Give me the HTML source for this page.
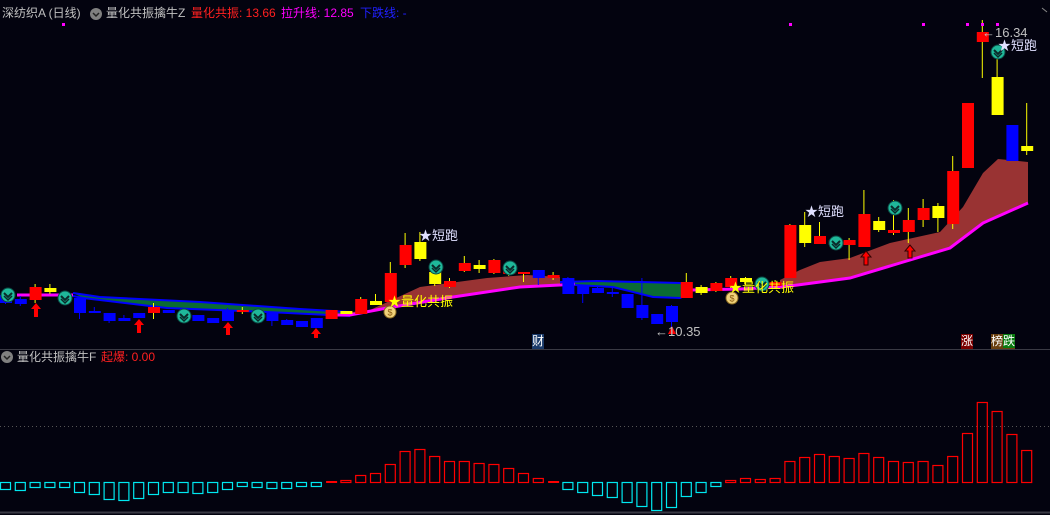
<!DOCTYPE html>
<html><head><meta charset="utf-8">
<style>
html,body{margin:0;padding:0;background:#03030f;}
body{width:1050px;height:515px;overflow:hidden;position:relative;font-family:"Liberation Sans","Noto Sans CJK SC",sans-serif;}
.t{position:absolute;font-size:12px;white-space:nowrap;line-height:15px;}
svg{position:absolute;left:0;top:0;}
</style></head><body>
<svg id="s" width="1050" height="515" xmlns="http://www.w3.org/2000/svg">
<line x1="0" y1="349.5" x2="1050" y2="349.5" stroke="#3a3a44" stroke-width="1"/>
<line x1="0" y1="426.5" x2="1050" y2="426.5" stroke="#555" stroke-width="1" stroke-dasharray="1,3"/>
<line x1="0" y1="512.5" x2="1050" y2="512.5" stroke="#3a3a44" stroke-width="2"/>
<polygon points="73,293 100,297 200,302 300,309 350,312 350,316 267,312 167,308 83,298" fill="#0a6a34"/>
<polyline points="73,293 100,297 200,302 300,309 350,312" fill="none" stroke="#0000ff" stroke-width="2"/>
<polyline points="73,296 83,298 167,308 267,312 350,316" fill="none" stroke="#0000ff" stroke-width="2"/>
<polyline points="17,295 57,295 73,295" fill="none" stroke="#ff00ff" stroke-width="3"/>
<polygon points="335,314 370,310 420,287 487,278 527,275 560,277 560,285 520,287 453,297 387,308 350,315" fill="#993333"/>
<polyline points="335,315 350,315 387,308 453,297 520,287 560,285 575,284" fill="none" stroke="#ff00ff" stroke-width="3"/>
<polygon points="575,282 597,281 680,283 690,290 680,298 653,297 613,287 575,285" fill="#0a6a34"/>
<polyline points="560,282 597,281 680,283 692,288" fill="none" stroke="#0000ff" stroke-width="2"/>
<polyline points="575,285 613,287 653,297 680,298 692,292" fill="none" stroke="#0000ff" stroke-width="2"/>
<polyline points="692,290 740,289 780,287" fill="none" stroke="#ff00ff" stroke-width="3"/>
<polygon points="780,280 800,270 820,262 850,258 890,243 940,232 963,207 983,173 998,159 1028,162 1028,203 983,223 950,248 900,263 850,278 790,286 780,287" fill="#993333"/>
<polyline points="780,287 790,286 850,278 900,263 950,248 983,223 1028,203" fill="none" stroke="#ff00ff" stroke-width="3"/>
<g id="c"></g>
<g fill="#ff0000">
<path d="M36,303 l-5,6 h3 v8 h4 v-8 h3z"/>
<path d="M139,319 l-5,6 h3 v8 h4 v-8 h3z"/>
<path d="M228,322 l-5,6 h3 v7 h4 v-7 h3z"/>
<path d="M316,328 l-5,6 h3 v4 h4 v-4 h3z"/>
<path d="M866,251 l-5,6 h3 v8 h4 v-8 h3z" stroke="#300" stroke-width="1"/>
<path d="M910,245 l-5,6 h3 v7 h4 v-7 h3z" stroke="#300" stroke-width="1"/>
<path d="M672,326 l-4,8 h8z"/>
</g>
<g fill="#ff00ff">
<rect x="62" y="23" width="3" height="3"/><rect x="789" y="23" width="3" height="3"/><rect x="922" y="23" width="3" height="3"/><rect x="966" y="23" width="3" height="3"/><rect x="981" y="23" width="3" height="3"/><rect x="996" y="23" width="3" height="3"/>
</g>
<g id="icons"></g>
<g>
<circle cx="390" cy="312" r="6" fill="#f0d27a" stroke="#8a6a20"/><text x="390" y="315.5" font-size="9" text-anchor="middle" fill="#8a5a10" font-family="Liberation Sans">$</text>
<circle cx="732" cy="298" r="6" fill="#f0d27a" stroke="#8a6a20"/><text x="732" y="301.5" font-size="9" text-anchor="middle" fill="#8a5a10" font-family="Liberation Sans">$</text>
</g>
<circle cx="96" cy="14" r="6" fill="#808080"/><path d="M93,13 l3,3 l3,-3" stroke="#222" stroke-width="1.5" fill="none"/>
<circle cx="7" cy="357" r="6" fill="#808080"/><path d="M4,356 l3,3 l3,-3" stroke="#222" stroke-width="1.5" fill="none"/>
<path d="M1042,8 l5,4" stroke="#888" fill="none"/>
</svg>
<div class="t" style="left:2px;top:6px;color:#c0c0c0">深纺织A (日线)</div>
<div class="t" style="left:106px;top:6px;color:#c0c0c0">量化共振擒牛Z</div>
<div class="t" style="left:191px;top:6px;color:#ff2020">量化共振: 13.66</div>
<div class="t" style="left:281px;top:6px;color:#ff00ff">拉升线: 12.85</div>
<div class="t" style="left:360px;top:6px;color:#2020ff">下跌线: -</div>
<div class="t" style="left:17px;top:350px;color:#c0c0c0">量化共振擒牛F</div>
<div class="t" style="left:101px;top:350px;color:#ff2020">起爆: 0.00</div>
<div class="t" style="left:388px;top:294px;color:#ffff00;font-size:13px">★量化共振</div>
<div class="t" style="left:729px;top:280px;color:#ffff00;font-size:13px">★量化共振</div>
<div class="t" style="left:419px;top:228px;color:#e0e0ff;font-size:13px">★短跑</div>
<div class="t" style="left:805px;top:204px;color:#e0e0ff;font-size:13px">★短跑</div>
<div class="t" style="left:998px;top:38px;color:#e0e0ff;font-size:13px">★短跑</div>
<div class="t" style="left:655px;top:324px;color:#c0c0c0;font-size:13px">←10.35</div>
<div class="t" style="left:982px;top:25px;color:#c0c0c0;font-size:13px">←16.34</div>
<div class="t" style="left:532px;top:334px;color:#fff;background:#1a3a6a">财</div>
<div class="t" style="left:961px;top:334px;color:#fff;background:#7a0000">涨</div>
<div class="t" style="left:991px;top:334px;color:#fff;background:#6a4010">榜<span style="background:#0a7a10">跌</span></div>
<script>
var ns="http://www.w3.org/2000/svg";
function el(p,n,a){var e=document.createElementNS(ns,n);for(var k in a)e.setAttribute(k,a[k]);p.appendChild(e);return e;}
var g=document.getElementById('c');
var C={r:'#ff0000',y:'#ffff00',b:'#0000ff'};
var d=[[0,'b',295,303,290,304],[1,'b',299,304,296,306],[2,'r',287,300,284,303],[3,'y',288,292,284,294],[4,'b',296,300,294,302],
[5,'b',298,313,297,319],[6,'b',311,313,307,313],[7,'b',313,321,313,323],[8,'b',318,321,315,321],[9,'b',313,318,313,318],
[10,'r',307,313,303,319],[11,'b',310,313,310,313],[12,'b',313,318,312,320],[13,'b',315,321,315,321],[14,'b',318,323,318,323],
[15,'b',310,321,308,321],[16,'r',310,312,307,314],[17,'b',312,318,311,320],[18,'b',312,321,312,326],[19,'b',320,325,319,325],
[20,'b',321,327,321,327],[21,'b',318,328,318,328],[22,'r',310,319,310,319],[23,'y',311,314,311,314],[24,'r',299,314,297,314],
[25,'y',301,305,294,305],[26,'r',273,302,262,302],[27,'r',245,265,233,268],[28,'y',242,259,232,261],[29,'y',272,284,262,286],
[30,'r',281,287,278,288],[31,'r',263,271,256,272],[32,'y',265,269,260,273],[33,'r',260,273,259,274],[34,'r',270,274,266,276],
[35,'r',272,274,272,282],[36,'b',270,278,270,285],[37,'r',275,278,272,280],[38,'b',278,294,277,294],[39,'b',286,294,286,303],
[40,'b',288,293,286,293],[41,'b',292,294,286,297],[42,'b',294,308,294,308],[43,'b',305,318,278,320],[44,'b',314,324,314,324],
[45,'b',306,322,305,332],[46,'r',282,298,273,298],[47,'y',287,293,285,295],[48,'r',283,291,282,292],[49,'r',278,287,276,288],
[50,'y',278,282,277,285],[51,'y',283,287,280,290],[52,'r',282,286,280,288],[53,'r',225,278,224,278],[54,'y',225,243,212,247],
[55,'r',236,244,222,244],[56,'r',240,245,238,247],[57,'r',240,245,238,260],[58,'r',214,247,190,247],[59,'y',221,230,217,232],
[60,'r',230,233,200,235],[61,'r',220,232,208,243],[62,'r',208,220,199,227],[63,'y',206,218,203,232],[64,'r',171,224,156,229],
[65,'r',103,168,103,168],[66,'r',32,42,20,78],[67,'y',77,115,50,115],[68,'b',125,161,125,161],[69,'y',146,151,103,155]];
d.forEach(function(a){var x=a[0]*14.8;var col=C[a[1]];var wc=a[1]=='b'?C.b:C.y;
el(g,'line',{x1:x+5.5,x2:x+5.5,y1:a[4],y2:a[5],stroke:wc,'stroke-width':1});
el(g,'rect',{x:x,y:a[2],width:12,height:Math.max(2,a[3]-a[2]),fill:col});});
var v=[489,490,487,487,487,492,494,499,500,498,494,492,492,493,492,489,486,487,488,488,486,486,482,480,475,473,464,451,449,456,461,461,463,464,468,473,478,482,489,492,495,497,502,506,510,507,496,492,486,480,478,479,478,461,457,454,456,458,453,457,461,462,461,465,456,433,402,411,434,450];
var s=document.getElementById('s');
v.forEach(function(y,i){var x=i*14.8+0.5;
if(y>482){el(s,'rect',{x:x,y:482.5,width:10,height:y-482,fill:'none',stroke:'#00e8f0','stroke-width':1.2});}
else if(y==482){el(s,'rect',{x:x,y:481,width:11,height:2,fill:'#ff0000'});}
else{el(s,'rect',{x:x,y:y+0.5,width:10,height:482-y,fill:'none',stroke:'#ff0000','stroke-width':1.2});}});
var ic=document.getElementById('icons');
[[8,295],[65,298],[184,316],[258,316],[436,267],[510,268],[762,284],[836,243],[895,208],[998,52]].forEach(function(p){
el(ic,'circle',{cx:p[0],cy:p[1],r:7,fill:'#1fb89a',stroke:'#0b4a44','stroke-width':1});
el(ic,'path',{d:'M'+(p[0]-4)+','+(p[1]-2)+' l4,4 l4,-4',stroke:'#0a2a2a','stroke-width':2,fill:'none'});
el(ic,'path',{d:'M'+(p[0]-4)+','+(p[1]+1)+' l4,4 l4,-4',stroke:'#0a2a2a','stroke-width':1.5,fill:'none'});});
</script>
</body></html>
